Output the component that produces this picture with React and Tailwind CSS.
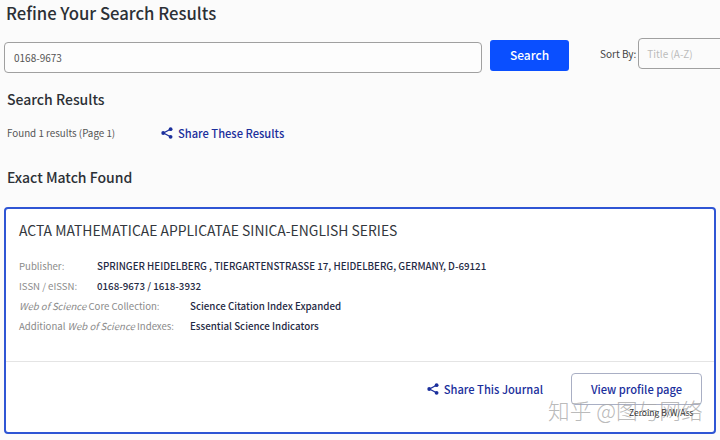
const font = { fontFamily: '"Noto Sans CJK SC", sans-serif' };

function ShareIcon({ className }) {
  return (
    <svg viewBox="0 0 12 12" className={className} fill="currentColor" stroke="currentColor">
      <path d="M9.5 2.2 2.5 6l7 3.8" fill="none" strokeWidth="1.3" />
      <circle cx="9.6" cy="2.2" r="1.9" stroke="none" />
      <circle cx="2.2" cy="6" r="1.9" stroke="none" />
      <circle cx="9.6" cy="9.8" r="1.9" stroke="none" />
    </svg>
  );
}

function Row({ label, value, labelWidth }) {
  return (
    <div className="flex h-5 items-center leading-5 whitespace-nowrap">
      <div className={`${labelWidth} shrink-0 text-[9.6px] text-[#8a8a8a]`}>{label}</div>
      <div className="text-[9.75px] font-medium text-[#1f2a44]">{value}</div>
    </div>
  );
}

export default function App() {
  return (
    <div style={font} className="relative h-[440px] w-[720px] overflow-hidden bg-[#fbfbfb] text-[#2a2e33]">
      <h1 className="h-[28px] pl-[6px] pt-[1px] text-[16.7px] font-medium leading-[25px] text-[#2c3036]">Refine Your Search Results</h1>
      <div className="mt-[10px] flex h-[35px] items-start pl-[4px]">
        <div className="mt-[4px] flex h-[31px] w-[478px] shrink-0 items-center rounded-[4px] border-[1.5px] border-[#a0a0a0] bg-[#fdfdfd] pl-[9px] text-[10px] text-[#555]">0168-9673</div>
        <button className="ml-[8px] mt-[2px] flex h-[31px] w-[79px] shrink-0 items-center justify-center rounded-[3px] bg-[#0a4fff] pb-[2px] text-[12px] font-medium text-white">Search</button>
        <div className="ml-[31px] mt-[7px] shrink-0 whitespace-nowrap text-[10px] leading-[18px] text-[#444]">Sort By:</div>
        <div className="ml-[2px] flex h-[31px] w-[100px] shrink-0 items-center rounded-[4px] border-[1.5px] border-[#a0a0a0] pl-[8px] text-[10px] text-[#bbb]">Title (A-Z)</div>
      </div>
      <h2 className="mt-[14px] h-[24px] pl-[7px] text-[14px] font-medium leading-[24px] text-[#2c3036]">Search Results</h2>
      <div className="mt-[12px] flex h-[20px] items-center pl-[7px] text-[9.8px] text-[#555]">
        <span className="w-[154px]">Found 1 results (Page 1)</span>
        <ShareIcon className="h-[12px] w-[12px] text-[#1b2f9c]" />
        <span className="ml-[5px] text-[11.15px] font-medium text-[#1b2f9c]">Share These Results</span>
      </div>
      <h2 className="mt-[22px] h-[24px] pl-[7px] text-[14px] font-medium leading-[24px] text-[#2c3036]">Exact Match Found</h2>
      <section className="ml-[4px] mt-[18px] h-[227px] w-[712px] rounded-[4px] border-2 border-[#2f55d4] bg-white">
        <div className="h-[152px] px-[13px]">
          <div className="pt-[9px] text-[13.9px] leading-[24px] text-[#33373d]">ACTA MATHEMATICAE APPLICATAE SINICA-ENGLISH SERIES</div>
          <div className="mt-[14px]">
            <Row labelWidth="w-[78px]" label="Publisher:" value="SPRINGER HEIDELBERG , TIERGARTENSTRASSE 17, HEIDELBERG, GERMANY, D-69121" />
            <Row labelWidth="w-[78px]" label="ISSN / eISSN:" value="0168-9673 / 1618-3932" />
            <Row labelWidth="w-[171px]" label={<><i>Web of Science</i> Core Collection:</>} value="Science Citation Index Expanded" />
            <Row labelWidth="w-[171px]" label={<>Additional <i>Web of Science</i> Indexes:</>} value="Essential Science Indicators" />
          </div>
        </div>
        <div className="flex h-[71px] items-start justify-end border-t border-[#e4e4e4] pr-[12px] pt-[11px]">
          <div className="flex h-[32px] items-center">
            <ShareIcon className="h-[12px] w-[12px] text-[#1b2f9c]" />
            <span className="ml-[5px] text-[11.15px] font-medium text-[#1b2f9c]">Share This Journal</span>
          </div>
          <div className="ml-[28px] flex h-[32px] w-[131px] items-center justify-center rounded-[4px] border-[1.5px] border-[#a9afc4] text-[11.15px] font-medium text-[#1b2f9c]">View profile page</div>
        </div>
      </section>
      <div className="absolute left-[548px] top-[395px] whitespace-nowrap text-[21.7px] font-light leading-[30px] text-[#a8a8a8]/80">知乎 @图与网络</div>
      <div className="absolute left-[629px] top-[406px] whitespace-nowrap text-[8.5px] leading-[12px] text-[#333]">Zeroing B/W/Ass</div>
    </div>
  );
}
